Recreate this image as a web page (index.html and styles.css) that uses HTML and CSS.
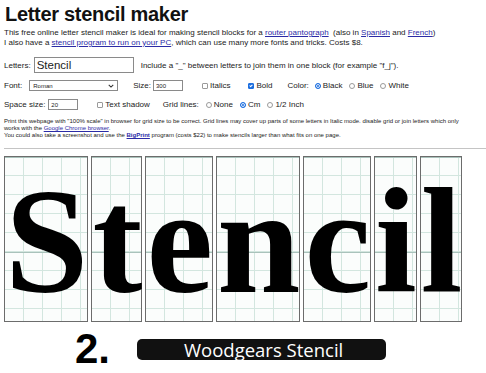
FILE: index.html
```html
<!DOCTYPE html>
<html lang="en">
<head>
    <meta charset="UTF-8">
    <meta name="viewport" content="width=device-width, initial-scale=1.0">
    <link rel="stylesheet" href="styles.css">
</head>
<body>
    <div id="page">
        <h1>Letter stencil maker</h1>
        <p class="intro">
            This free online letter stencil maker is ideal for making stencil blocks for a <a href="#">router pantograph</a>&nbsp; (also in <a href="#">Spanish</a> and <a href="#">French</a>)<br>
            I also have a <a href="#">stencil program to run on your PC</a>, which can use many more fonts and tricks. Costs $8.
        </p>

        <div class="row row-letters">
            <label>Letters:</label>
            <input type="text" class="letters" value="Stencil">
            <span class="hint">Include a "_" between letters to join them in one block (for example "f_j").</span>
        </div>

        <div class="row row-font">
            <label>Font:</label>
            <span class="select">
                <select><option>Roman</option></select>
                <svg class="chevron" viewBox="0 0 8 5" width="6" height="4"><path d="M1 1 L4 4 L7 1" fill="none" stroke="#333" stroke-width="1.4"/></svg>
            </span>
            <label class="size-label">Size:</label>
            <input type="text" class="small-num size" value="300">
            <label class="check italics"><input type="checkbox"> Italics</label>
            <label class="check bold"><input type="checkbox" checked> Bold</label>
            <span class="color-label">Color:</span>
            <label class="check first"><input type="radio" name="color" checked> Black</label>
            <label class="check"><input type="radio" name="color"> Blue</label>
            <label class="check"><input type="radio" name="color"> White</label>
        </div>

        <div class="row row-space">
            <label>Space size:</label>
            <input type="text" class="small-num space" value="20">
            <label class="check shadow"><input type="checkbox"> Text shadow</label>
            <span class="grid-label">Grid lines:</span>
            <label class="check"><input type="radio" name="grid"> None</label>
            <label class="check"><input type="radio" name="grid" checked> Cm</label>
            <label class="check"><input type="radio" name="grid"> 1/2 Inch</label>
        </div>

        <p class="notes">
            <span>Print this webpage with "100% scale" in browser for grid size to be correct. Grid lines may cover up parts of some letters in Italic mode. disable grid or join letters which only</span><br>
            <span>works with the <a href="#">Google Chrome browser</a>.</span><br>
            <span>You could also take a screenshot and use the <a href="#"><b>BigPrint</b></a> program (costs $22) to make stencils larger than what fits on one page.</span>
        </p>

        <hr>

        <div class="stencil">
            <span class="block">S</span>
            <span class="block">t</span>
            <span class="block">e</span>
            <span class="block">n</span>
            <span class="block">c</span>
            <span class="block">i</span>
            <span class="block">l</span>
        </div>
    </div>

    <div class="caption">
        <span class="step">2.</span>
        <span class="pill">Woodgears Stencil</span>
    </div>
</body>
</html>
```

FILE: styles.css
```css
body {
    margin: 0;
    width: 486px;
    height: 373px;
    overflow: hidden;
    background-color: #fff;
    font-family: "Liberation Sans", Arial, sans-serif;
    font-size: 8px;
    color: #222;
}

#page {
    padding: 0 4px;
}

a {
    color: #2b2ba6;
}

h1 {
    margin: 2px 0 0 1px;
    font-size: 20px;
    line-height: 24px;
    letter-spacing: -0.3px;
    color: #111;
}

.intro {
    margin: 2px 0 0;
    line-height: 10px;
    white-space: nowrap;
}

.row {
    display: flex;
    align-items: center;
    white-space: nowrap;
}

.row-letters {
    margin-top: 9px;
    height: 16px;
}

.row-font {
    margin-top: 7px;
    height: 11px;
}

.row-space {
    margin-top: 8px;
    height: 11px;
}

input[type=text] {
    box-sizing: border-box;
    border: 1px solid #8a8a8a;
    padding: 0 2px;
    margin: 0;
    font-family: "Liberation Sans", Arial, sans-serif;
    color: #222;
    outline: none;
}

input.letters {
    width: 100px;
    height: 16px;
    margin-left: 3px;
    font-size: 11.5px;
}

.hint {
    margin-left: 7px;
}

.select {
    position: relative;
    display: inline-block;
    margin-left: 7px;
}

.select select {
    appearance: none;
    -webkit-appearance: none;
    display: block;
    box-sizing: border-box;
    width: 89px;
    height: 11px;
    margin: 0;
    padding: 0 0 0 3px;
    border: 1px solid #8a8a8a;
    border-radius: 0;
    background: #fff;
    font-family: "Liberation Sans", Arial, sans-serif;
    font-size: 6px;
    color: #222;
}

.chevron {
    position: absolute;
    right: 4px;
    top: 4px;
}

.small-num {
    width: 30px;
    height: 11px;
    font-size: 6px;
}

.size-label {
    margin-left: 15px;
}

input.size {
    margin-left: 2px;
}

input.space {
    margin-left: 3px;
}

.check {
    display: inline-flex;
    align-items: center;
    margin-left: 7px;
}

.check input {
    appearance: none;
    -webkit-appearance: none;
    position: relative;
    box-sizing: border-box;
    width: 6px;
    height: 6px;
    margin: 0 2px 0 0;
    border: 1px solid #9a9a9a;
    background: #fff;
}

.check input[type=checkbox] {
    border-radius: 1px;
}

.check input[type=checkbox]:checked {
    background: #1d6fe0;
    border-color: #1d6fe0;
}

.check input[type=checkbox]:checked::after {
    content: "";
    position: absolute;
    left: 1px;
    top: 0;
    width: 1px;
    height: 2px;
    border: solid #fff;
    border-width: 0 1px 1px 0;
    transform: rotate(45deg);
}

.check input[type=radio] {
    border-radius: 50%;
}

.check input[type=radio]:checked {
    border: 1.5px solid #1d6fe0;
    background: #1d6fe0;
    box-shadow: inset 0 0 0 1px #fff;
}

.italics {
    margin-left: 19px;
}

.bold {
    margin-left: 18px;
}

.color-label {
    margin-left: 15px;
}

.check.first {
    margin-left: 6px;
}

.shadow {
    margin-left: 19px;
}

.grid-label {
    margin-left: 13px;
}

.notes {
    margin: 8px 0 0;
    font-size: 6px;
    line-height: 7px;
    white-space: nowrap;
}

hr {
    margin: 9px -4px 0 0;
    border: 0;
    border-top: 1px solid #c4c4c4;
}

.stencil {
    display: flex;
    gap: 3px;
    margin-top: 7px;
}

.block {
    display: block;
    height: 164px;
    border: 1px solid #6c6c6c;
    background-color: #fbfdfc;
    background-image:
        linear-gradient(to bottom, #a9c2bb 1px, transparent 1px),
        linear-gradient(to right, #d3e6df 1px, transparent 1px),
        linear-gradient(to bottom, #d3e6df 1px, transparent 1px);
    background-size: 95px 95px, 19px 19px, 19px 19px;
    background-position: 0 0, -1px 0, 0 -1px;
    font-family: "Liberation Serif", "Times New Roman", serif;
    font-weight: bold;
    font-size: 150px;
    line-height: 168px;
    letter-spacing: -1px;
    color: #000;
}

.caption {
    display: flex;
    align-items: flex-start;
    height: 51px;
    padding-left: 75px;
}

.step {
    width: 62px;
    margin-top: 6px;
    font-family: "Liberation Sans", Arial, sans-serif;
    font-weight: bold;
    font-size: 42px;
    line-height: 42px;
    color: #000;
}

.pill {
    box-sizing: border-box;
    width: 249px;
    height: 21px;
    margin-top: 17px;
    padding-left: 47px;
    border-radius: 5px;
    background-color: #111;
    color: #fff;
    font-family: "Open Sans", sans-serif;
    font-size: 18.5px;
    line-height: 21px;
}
```
